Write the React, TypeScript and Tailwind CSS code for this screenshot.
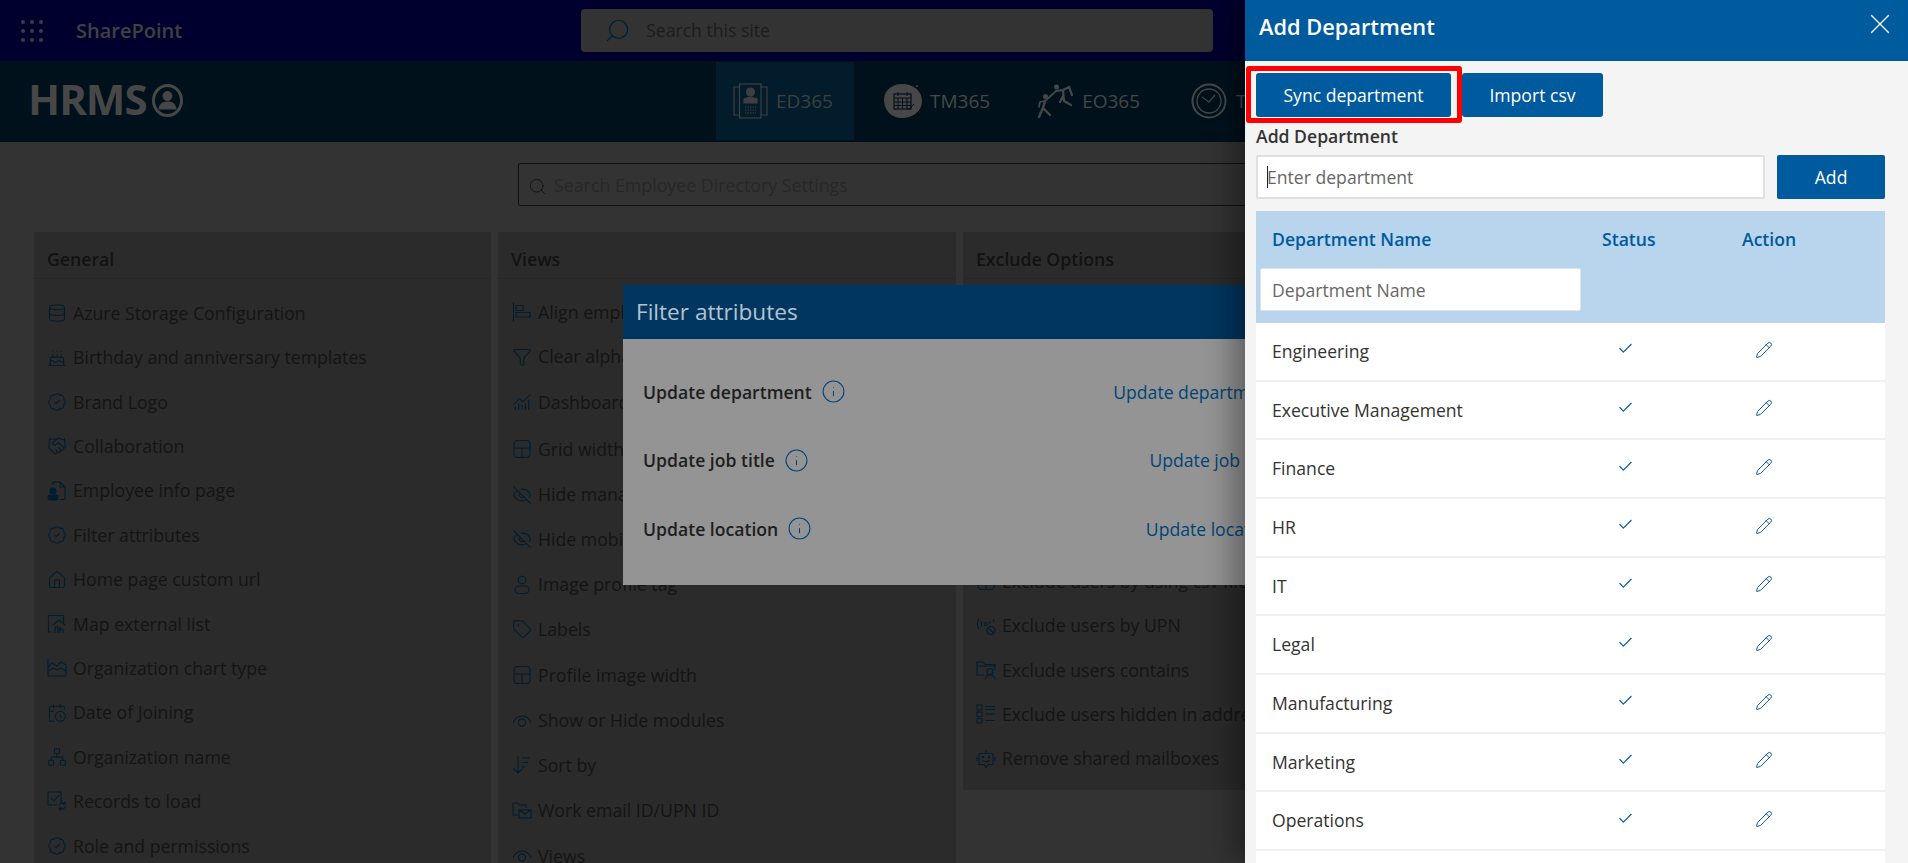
import type { ReactNode } from "react";
import {
  BadgeCheck,
  Cake,
  CalendarClock,
  ChartNoAxesCombined,
  Check,
  Database,
  EyeOff,
  Funnel,
  Handshake,
  House,
  Info,
  Network,
  Pencil,
  Search,
  Tag,
  X,
} from "lucide-react";

const FONT = "font-['Open_Sans','Noto_Sans',sans-serif]";
const ic = { size: 20, strokeWidth: 1.25 };

/* ── small hand drawn icons for what lucide does not have ── */
function Svg({ children }: { children: ReactNode }) {
  return (
    <svg width="20" height="20" viewBox="0 0 20 20" fill="none" stroke="currentColor" strokeWidth="1.1">
      {children}
    </svg>
  );
}

const AlignIcon = () => (
  <Svg>
    <path d="M1.5 0.5v19M4 3.5h7v5H4zM4 10.5h14v4.5H4z" />
  </Svg>
);
const GridIcon = () => (
  <Svg>
    <rect x="2" y="1.5" width="16" height="17" rx="3.5" />
    <path d="M2 9h16M10 9v9.5" />
  </Svg>
);
const TagUserIcon = () => (
  <Svg>
    <circle cx="10" cy="5" r="3.8" />
    <rect x="3" y="11" width="14" height="7.5" rx="3.7" />
  </Svg>
);
const HalfEyeIcon = () => (
  <Svg>
    <path d="M1 11.5C3 7 6.5 5 10 5s7 2 9 6.5" />
    <circle cx="10" cy="11.5" r="3.6" />
  </Svg>
);
const SortIcon = () => (
  <Svg>
    <path d="M6 1v17M1.5 13.5 6 18l4.500-4.500M10 3h8M10 7.500h6M10 12h3" />
  </Svg>
);
const WorkMailIcon = () => (
  <Svg>
    <path d="M6 15H1V3h5l1.500 2H14v3" />
    <rect x="7" y="10" width="12" height="8" />
    <path d="m7 10 6 4 6-4" />
  </Svg>
);
const FileUserIcon = () => (
  <Svg>
    <path d="M6 4V1h7l5 5v11.500a1 1 0 0 1-1 1h-4M13 1v5h5" />
    <circle cx="6" cy="10" r="3" fill="currentColor" />
    <rect x="1" y="14" width="10" height="5" rx="2.500" fill="currentColor" />
  </Svg>
);
const MapListIcon = () => (
  <Svg>
    <path d="M4 18H1.500V1.500h15V10" />
    <path d="m6 11 6-5 6 5M8 19v-6h3v6M13 19v-5l3 2v3" />
  </Svg>
);
const AreaChartIcon = () => (
  <Svg>
    <path d="M1 1v17h18M1 9l4-4 5 3 4-4 5 3v10M1 13l5-3 4 2 4-2 5 3" />
  </Svg>
);
const RecordsIcon = () => (
  <Svg>
    <path d="M14 12V1H1v13h9M4 7l3 3 5-6" />
    <path d="M12 15a3.500 3.500 0 0 1 6-2M18.500 15a3.500 3.500 0 0 1-6 2M18 10.500V13h-2.500M12.500 19.500V17H15" />
  </Svg>
);
const RadioOffIcon = () => (
  <Svg>
    <path d="M3 3C1 6 1 10 3 13M6 5c-1 2-1 4 0 6M13 5c.7 1 1 2 1 3M17 3c.7 1 1 2 1 3" />
    <circle cx="9.500" cy="8" r="1.500" />
    <circle cx="15" cy="14.500" r="4" />
    <path d="m12.500 12 5 5" />
  </Svg>
);
const FolderUserIcon = () => (
  <Svg>
    <path d="M8 15H1V2h6l2 2.500h10V10M1 6h18" />
    <circle cx="14" cy="11.500" r="3" />
    <path d="M9 19.500c.5-3 2.500-4.500 5-4.500s4.500 1.500 5 4.500" />
  </Svg>
);
const DashListIcon = () => (
  <Svg>
    <path d="M1 1h5v5H1zM1 8h5v4.500H1zM1 14.500h5V19H1zM9 2.500h10M9 5.500h10M9 10h10M9 16.500h10" />
  </Svg>
);
const BotIcon = () => (
  <Svg>
    <path d="M10 1v3M3 4.500h14v11h-5l-2 3-2-3H3z" />
    <path d="M1 8v4M19 8v4M6.500 11.500c1.500 1.500 5.500 1.500 7 0" />
    <circle cx="7" cy="8" r="0.600" />
    <circle cx="13" cy="8" r="0.600" />
  </Svg>
);
const ED365Icon = () => (
  <svg width="35" height="36" viewBox="0 0 35 36" fill="none" stroke="currentColor" strokeWidth="1.2">
    <path d="M7 4H1v28h6M28 4h6v28h-6" />
    <rect x="6.500" y="1" width="21.500" height="34" />
    <circle cx="17.500" cy="9" r="4" fill="currentColor" />
    <path d="M11 20v-4l6.500-2 6.500 2v4z" fill="currentColor" />
    <path d="M12 24h11M12 27h11M12 30h11" strokeDasharray="1.500 1" />
  </svg>
);
const TM365Icon = () => (
  <svg width="40" height="36" viewBox="0 0 40 36" fill="none">
    <path d="M17 1C29 0 39 7 39 18c0 10-9 17-20 17C8 35 1 27 1 17 1 8 8 2 17 1z" fill="currentColor" />
    <circle cx="34" cy="3" r="1" fill="currentColor" />
    <rect x="11" y="11" width="17" height="15" stroke="#00111c" strokeWidth="1.200" />
    <path d="M11 15h17M15 9v4M24 9v4M11 19h17M11 22.500h17M15 15v11M19.500 15v11M24 15v11M25 27l6-6" stroke="#00111c" />
  </svg>
);
const EO365Icon = () => (
  <svg width="36" height="36" viewBox="0 0 36 36" fill="none" stroke="currentColor" strokeLinecap="round" strokeLinejoin="round">
    <circle cx="8.500" cy="13.500" r="2.500" fill="currentColor" stroke="none" />
    <circle cx="19.500" cy="4" r="2.500" fill="currentColor" stroke="none" />
    <path d="M8 18l-2 7 7 7M6 25l-4 9" strokeWidth="2.400" />
    <path d="M3 19l5-1 10-9M3 19l-1 5" strokeWidth="1.700" />
    <path d="M19 8l7-1 6-3 3 8M26 7l1 11 7 4M26 13l-3 6" strokeWidth="2.200" />
  </svg>
);
const ClockIcon = () => (
  <svg width="36" height="36" viewBox="0 0 36 36" fill="none" stroke="currentColor" strokeWidth="2">
    <circle cx="18" cy="18" r="16.500" />
    <circle cx="18" cy="18" r="12" strokeWidth="1.300" />
    <path d="m11 14 7 5 6-7" strokeWidth="1.200" />
  </svg>
);
const WaffleIcon = () => (
  <div className="grid grid-cols-3 gap-x-[5px] gap-y-[5px]">
    {Array.from({ length: 9 }).map((_, i) => (
      <span key={i} className="h-[4px] w-[4px] rounded-full bg-[#3e3e3e]" />
    ))}
  </div>
);

/* ── settings data ── */
const general: { t: string; i: ReactNode }[] = [
  { t: "Azure Storage Configuration", i: <Database {...ic} /> },
  { t: "Birthday and anniversary templates", i: <Cake {...ic} /> },
  { t: "Brand Logo", i: <BadgeCheck {...ic} /> },
  { t: "Collaboration", i: <Handshake {...ic} /> },
  { t: "Employee info page", i: <FileUserIcon /> },
  { t: "Filter attributes", i: <BadgeCheck {...ic} /> },
  { t: "Home page custom url", i: <House {...ic} /> },
  { t: "Map external list", i: <MapListIcon /> },
  { t: "Organization chart type", i: <AreaChartIcon /> },
  { t: "Date of Joining", i: <CalendarClock {...ic} /> },
  { t: "Organization name", i: <Network {...ic} /> },
  { t: "Records to load", i: <RecordsIcon /> },
  { t: "Role and permissions", i: <BadgeCheck {...ic} /> },
];

const views: { t: string; i: ReactNode; c: string }[] = [
  { t: "Align employee", i: <AlignIcon />, c: "mt-0" },
  { t: "Clear alphabet", i: <Funnel {...ic} />, c: "mt-0" },
  { t: "Dashboard", i: <ChartNoAxesCombined {...ic} />, c: "mt-[1px]" },
  { t: "Grid width", i: <GridIcon />, c: "mt-[3px]" },
  { t: "Hide manager", i: <EyeOff {...ic} />, c: "mt-[1px]" },
  { t: "Hide mobile", i: <EyeOff {...ic} />, c: "mt-0" },
  { t: "Image profile tag", i: <TagUserIcon />, c: "mt-[1px]" },
  { t: "Labels", i: <Tag {...ic} />, c: "mt-0" },
  { t: "Profile image width", i: <GridIcon />, c: "mt-[2px]" },
  { t: "Show or Hide modules", i: <HalfEyeIcon />, c: "mt-[1px]" },
  { t: "Sort by", i: <SortIcon />, c: "mt-0" },
  { t: "Work email ID/UPN ID", i: <WorkMailIcon />, c: "mt-[1px]" },
  { t: "Views", i: <HalfEyeIcon />, c: "mt-[1px]" },
];

const exclude: { t: string; i: ReactNode }[] = [
  { t: "Exclude users by using csv file", i: <GridIcon /> },
  { t: "Exclude users by UPN", i: <RadioOffIcon /> },
  { t: "Exclude users contains", i: <FolderUserIcon /> },
  { t: "Exclude users hidden in address list", i: <DashListIcon /> },
  { t: "Remove shared mailboxes", i: <BotIcon /> },
];

const departments = [
  "Engineering",
  "Executive Management",
  "Finance",
  "HR",
  "IT",
  "Legal",
  "Manufacturing",
  "Marketing",
  "Operations",
];

const filters = [
  { label: "Update department", link: "Update department" },
  { label: "Update job title", link: "Update job title" },
  { label: "Update location", link: "Update location" },
];

function SettingRow({ icon, text, className = "" }: { icon: ReactNode; text: string; className?: string }) {
  return (
    <div className={`flex h-[44.4px] items-center whitespace-nowrap ${className}`}>
      <span className="flex w-[26px] shrink-0 text-[#021d30]">{icon}</span>
      <span className="text-[17.7px] text-[#141414]">{text}</span>
    </div>
  );
}

function Card({ title, className, children }: { title: string; className: string; children: ReactNode }) {
  return (
    <section className={`bg-[#2b2b2b] ${className}`}>
      <h2 className="flex h-[47px] items-center border-b border-[#272727] pl-[13px] pt-[8px] text-[17.7px] font-semibold text-[#121212]">
        {title}
      </h2>
      {children}
    </section>
  );
}

function FilterModal() {
  return (
    <div className="absolute left-[623px] top-[285px] h-[299.500px] w-[680px] bg-[#949494]">
      <div className="flex h-[54px] items-center bg-[#003660] pl-[13px] text-[22.6px] text-[#b4c3cf]">Filter attributes</div>
      <div className="flex flex-col gap-[12.500px] pl-[20px] pr-[27px] pt-[25px]">
        {filters.map((f) => (
          <div key={f.label} className="flex h-[56px] items-center justify-between">
            <div className="flex items-center gap-[9px]">
              <span className="text-[17.6px] font-semibold text-[#1e1e1e]">{f.label}</span>
              <Info size={25} strokeWidth={1} className="text-[#004478]" />
            </div>
            <a className="text-[17.6px] text-[#004478]">{f.link}</a>
          </div>
        ))}
      </div>
    </div>
  );
}

function DepartmentPanel() {
  return (
    <aside className="absolute bottom-0 right-0 top-0 flex w-[663px] flex-col bg-[#f4f4f4] shadow-[-12px_0_28px_rgba(0,0,0,0.35)]">
      <header className="flex h-[61px] shrink-0 items-start justify-between bg-[#005a9e] pl-[14px] pr-[11.500px] text-white">
        <h1 className="mt-[10px] text-[21.8px] font-semibold leading-[34px]">Add Department</h1>
        <X size={34} strokeWidth={0.9} className="mt-[7px]" />
      </header>

      <div className="flex flex-col pl-[11px] pr-[23px]">
        <div className="mt-[12px] flex items-center">
          <div className="relative">
            <button className="h-[44px] w-[195px] rounded-[3px] bg-[#005a9e] text-[17.6px] text-white">
              Sync department
            </button>
            {/* red callout drawn on the screenshot */}
            <span className="absolute -bottom-[6px] -left-[10px] -right-[11px] -top-[7px] rounded-[3px] border-[5px] border-[#ff0000]" />
          </div>
          <button className="ml-[11px] h-[44px] w-[141px] rounded-[3px] bg-[#005a9e] text-[17.6px] text-white">
            Import csv
          </button>
        </div>

        <label className="mt-[7px] text-[17.6px] font-semibold leading-[24px] text-[#333]">Add Department</label>

        <div className="mt-[7px] flex items-start gap-[12px]">
          <div className="flex h-[44px] w-[510px] items-center rounded-[2px] border-2 border-[#e0e0e0] bg-white pl-[9px] text-[17.6px] text-[#666]">
            <span className="mr-[-1px] h-[22px] w-px bg-[#222]" />
            Enter department
          </div>
          <button className="h-[44px] w-[108px] rounded-[2px] bg-[#005a9e] text-[17.6px] text-white">Add</button>
        </div>

        {/* table header with the name filter */}
        <div className="mt-[12px] h-[112px] shrink-0 bg-[#b8d5ed] pl-[4px]">
          <div className="flex h-[57px] items-center text-[17.6px] font-semibold text-[#005a9e]">
            <span className="ml-[12px] w-[330px]">Department Name</span>
            <span className="w-[140px]">Status</span>
            <span>Action</span>
          </div>
          <div className="flex h-[43px] w-[321px] items-center rounded-[2px] border border-[#dde5ec] bg-white pl-[11px] pt-[1px] text-[17.6px] text-[#666]">
            Department Name
          </div>
        </div>

        {departments.map((d) => (
          <div key={d} className="flex h-[58.67px] shrink-0 items-center border-b-2 border-[#f0f0f0] bg-white pl-[16px] text-[17.6px] text-[#333]">
            <span className="w-[345px]">{d}</span>
            <span className="w-[138px] pb-[5px]">
              <Check size={17} strokeWidth={1.6} className="text-[#005a9e]" />
            </span>
            <span className="pb-[3px]">
              <Pencil size={18} strokeWidth={1.3} className="text-[#005a9e]" />
            </span>
          </div>
        ))}
        <div className="h-[20px] bg-white" />
      </div>
    </aside>
  );
}

export default function App() {
  return (
    <div className={`relative h-[863px] w-[1908px] overflow-hidden bg-[#333333] ${FONT}`}>
      {/* suite bar */}
      <div className="flex h-[61px] items-center bg-[#00002e]">
        <div className="ml-[21px]">
          <WaffleIcon />
        </div>
        <span className="ml-[33px] text-[20px] font-semibold text-[#404040]">SharePoint</span>
        <div className="ml-[399px] flex h-[43px] w-[632px] items-center rounded-[4px] bg-[#333333] pl-[23px]">
          <Search size={27} strokeWidth={1.1} className="-scale-x-100 text-[#021f33]" />
          <span className="ml-[15px] text-[17.6px] text-[#1c1c1c]">Search this site</span>
        </div>
      </div>

      {/* app nav */}
      <div className="flex h-[81px] items-start bg-[#00111c] pl-[28px]">
        <div className="flex h-[81px] w-[688px] items-center pb-[5px] text-[#474747]">
          <span className="text-[42px] font-bold leading-none tracking-[-1px]">HRMS</span>
          <svg width="31" height="33" viewBox="0 0 31 33" fill="none" stroke="currentColor" className="ml-[5px] mt-[2px]">
            <ellipse cx="15.500" cy="16.500" rx="14" ry="15" strokeWidth="3" />
            <circle cx="15.500" cy="12" r="4.500" fill="currentColor" />
            <path d="M7 25c1-6 4-7 8.500-7S23 19 24 25z" fill="currentColor" />
          </svg>
        </div>
        <div className="mt-[1px] flex h-[78px] w-[138px] items-center gap-[8px] bg-[#021c2b] pl-[17px] text-[#3f3f3f]">
          <ED365Icon />
          <span className="text-[19px]">ED365</span>
        </div>
        <div className="mt-[1px] ml-[29px] flex h-[78px] items-center gap-[7px] text-[#474747]">
          <TM365Icon />
          <span className="text-[19px]">TM365</span>
        </div>
        <div className="mt-[1px] ml-[47px] flex h-[78px] items-center gap-[9px] text-[#474747]">
          <EO365Icon />
          <span className="text-[19px]">EO365</span>
        </div>
        <div className="mt-[1px] ml-[51px] flex h-[78px] items-center gap-[9px] text-[#474747]">
          <ClockIcon />
          <span className="text-[19px]">TS365</span>
        </div>
      </div>

      {/* settings search */}
      <div className="pl-[518px] pt-[21px]">
        <div className="flex h-[43px] w-[872px] items-center rounded-[2px] border border-[#111] pl-[9px] pt-[1px]">
          <Search size={19} strokeWidth={1.2} className="mt-[3px] text-[#141414]" />
          <span className="ml-[7px] text-[17.8px] text-[#272727]">Search Employee Directory Settings</span>
        </div>
      </div>

      {/* settings cards */}
      <div className="mt-[26px] flex gap-[7px] pl-[34px]">
        <Card title="General" className="h-[700px] w-[457px]">
          <div className="pl-[13px] pt-[12px]">
            {general.map((r) => (
              <SettingRow key={r.t} icon={r.i} text={r.t} />
            ))}
          </div>
        </Card>
        <Card title="Views" className="h-[700px] w-[458px]">
          <div className="pl-[14px] pt-[11px]">
            {views.map((r) => (
              <SettingRow key={r.t} icon={r.i} text={r.t} className={r.c} />
            ))}
          </div>
        </Card>
        <Card title="Exclude Options" className="h-[558px] w-[460px]">
          {/* rows above the csv one sit under the dialog */}
          <div className="pl-[13px] pt-[280px]">
            {exclude.map((r) => (
              <SettingRow key={r.t} icon={r.i} text={r.t} />
            ))}
          </div>
        </Card>
      </div>

      <FilterModal />
      <DepartmentPanel />
    </div>
  );
}
